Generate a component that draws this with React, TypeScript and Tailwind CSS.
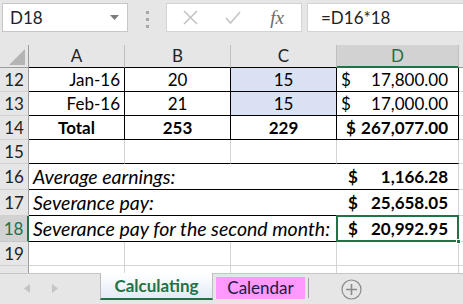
import React from 'react';

type RowProps = {
  label: string;
  h: string;
  active?: boolean;
  children: React.ReactNode;
};

// row header + cells
const Row: React.FC<RowProps> = ({ label, h, active, children }) => (
  <>
    <div
      className={`${h} flex items-center justify-center text-[17px] border-b ${
        active
          ? 'bg-[#d2d2d2] text-[#217346] border-b-[#c6c6c6] border-r-2 border-r-[#217346]'
          : 'bg-[#e6e6e6] text-[#222] border-b-[#d0d0d0] border-r border-r-[#9b9b9b]'
      }`}
    >
      {label}
    </div>
    {children}
  </>
);

const Money: React.FC<{ value: string; bold?: boolean; inset?: string }> = ({ value, bold, inset }) => (
  <div className={`flex items-center justify-between h-full pr-[10px] ${inset ?? 'pl-[4px]'} ${bold ? 'font-bold' : ''}`}>
    <span>$</span>
    <span>{value}</span>
  </div>
);

export default function App() {
  return (
    <div className="w-[463px] h-[304px] overflow-hidden bg-[#e6e6e6] font-['Lato',sans-serif] text-black leading-[20px]">
      {/* Formula bar */}
      <div className="flex h-[45px] pt-[3px]">
        <div className="ml-[2px] w-[126px] h-[29px] bg-white border border-[#c6c6c6] flex items-center justify-between pl-[7px] pr-[8px]">
          <span className="text-[17px] text-[#222]">D18</span>
          <svg width="9" height="5" viewBox="0 0 9 5">
            <path d="M0 0 L9 0 L4.5 5 Z" fill="#7a7a7a" />
          </svg>
        </div>
        <div className="w-[38px] flex flex-col items-center gap-[4px] pt-[8px]">
          <span className="w-[3px] h-[3px] bg-[#a8a8a8]" />
          <span className="w-[3px] h-[3px] bg-[#a8a8a8]" />
          <span className="w-[3px] h-[3px] bg-[#a8a8a8]" />
        </div>
        <div className="w-[136px] h-[29px] bg-white border border-[#d4d4d4] flex items-center">
          <div className="w-[46px] flex justify-center">
            <svg width="15" height="15" viewBox="0 0 15 15">
              <path d="M1 1 L14 14 M14 1 L1 14" stroke="#c3c3c3" strokeWidth="1.6" />
            </svg>
          </div>
          <div className="w-[40px] flex justify-center">
            <svg width="16" height="13" viewBox="0 0 16 13">
              <path d="M1 7 L5.5 12 L15 1" stroke="#c3c3c3" strokeWidth="1.6" fill="none" />
            </svg>
          </div>
          <div className="flex-1 flex justify-center">
            <span className="font-['Liberation_Serif',serif] italic text-[19px] text-[#6a6a6a] leading-none">
              fx
            </span>
          </div>
        </div>
        <div className="ml-[5px] flex-1 h-[29px] bg-white border-l border-y border-[#d4d4d4] flex items-center pl-[13px] text-[17px] text-[#222]">
          =D16*18
        </div>
      </div>

      {/* Sheet grid */}
      <div className="grid grid-cols-[29px_96px_106px_106px_122px_1fr] bg-white text-[17px]">
        {/* column headers */}
        <div className="h-[23px] bg-[#e6e6e6] border-r border-b border-[#9b9b9b] relative">
          <svg className="absolute right-[3px] bottom-[2px]" width="16" height="16" viewBox="0 0 16 16">
            <path d="M16 0 L16 16 L0 16 Z" fill="#b4b4b4" />
          </svg>
        </div>
        <div className="h-[23px] bg-[#e6e6e6] border-r border-r-[#c0c0c0] border-b border-b-black flex items-center justify-center text-[#222]">A</div>
        <div className="h-[23px] bg-[#e6e6e6] border-r border-r-[#c0c0c0] border-b border-b-black flex items-center justify-center text-[#222]">B</div>
        <div className="h-[23px] bg-[#e6e6e6] border-r border-r-[#c0c0c0] border-b border-b-black flex items-center justify-center text-[#222]">C</div>
        <div className="h-[23px] bg-[#d2d2d2] border-r border-r-[#c0c0c0] border-b-2 border-b-[#217346] flex items-center justify-center text-[#217346]">D</div>
        <div className="h-[23px] bg-[#e6e6e6] border-b border-[#9b9b9b]" />

        <Row label="12" h="h-[24px]">
          <div className="border-r border-b border-black flex items-center justify-end pr-[4px]">Jan-16</div>
          <div className="border-r border-b border-black flex items-center justify-center">20</div>
          <div className="border-r border-b border-black bg-[#d9e1f2] flex items-center justify-center">15</div>
          <div className="border-r border-b border-black"><Money value="17,800.00" /></div>
          <div className="border-b border-[#d4d4d4]" />
        </Row>
        <Row label="13" h="h-[24px]">
          <div className="border-r border-b border-black flex items-center justify-end pr-[4px]">Feb-16</div>
          <div className="border-r border-b border-black flex items-center justify-center">21</div>
          <div className="border-r border-b border-black bg-[#d9e1f2] flex items-center justify-center">15</div>
          <div className="border-r border-b border-black"><Money value="17,000.00" /></div>
          <div className="border-b border-[#d4d4d4]" />
        </Row>
        <Row label="14" h="h-[24px]">
          <div className="border-r border-b border-black flex items-center justify-center font-bold">Total</div>
          <div className="border-r border-b border-black flex items-center justify-center font-bold">253</div>
          <div className="border-r border-b border-black flex items-center justify-center font-bold">229</div>
          <div className="border-r border-b border-black"><Money value="267,077.00" bold inset="pl-[9px]" /></div>
          <div className="border-b border-[#d4d4d4]" />
        </Row>
        <Row label="15" h="h-[24px]">
          <div className="border-r border-r-[#d4d4d4] border-b border-b-black" />
          <div className="border-r border-r-[#d4d4d4] border-b border-b-black" />
          <div className="border-r border-r-[#d4d4d4] border-b border-b-black" />
          <div className="border-r border-r-[#d4d4d4] border-b border-b-black" />
          <div className="border-b border-[#d4d4d4]" />
        </Row>
        <Row label="16" h="h-[26px]">
          <div className="col-span-3 border-b border-black flex items-center pl-[4px] italic text-[19.5px] whitespace-nowrap">Average earnings:</div>
          <div className="border-r border-r-[#d4d4d4] border-b border-b-black"><Money value="1,166.28" bold inset="pl-[11px]" /></div>
          <div className="border-b border-[#d4d4d4]" />
        </Row>
        <Row label="17" h="h-[26px]">
          <div className="col-span-3 border-b border-black flex items-center pl-[4px] italic text-[19.5px] whitespace-nowrap">Severance pay:</div>
          <div className="border-r border-r-[#d4d4d4] border-b border-b-black"><Money value="25,658.05" bold inset="pl-[11px]" /></div>
          <div className="border-b border-[#d4d4d4]" />
        </Row>
        <Row label="18" h="h-[26px]" active>
          <div className="col-span-3 border-b border-black flex items-center pl-[4px] italic text-[19.5px] whitespace-nowrap">
            Severance pay for the second month:
          </div>
          <div className="relative border-r border-r-[#d4d4d4] border-b border-b-black">
            <Money value="20,992.95" bold inset="pl-[11px]" />
            <div className="absolute -top-px -left-px -right-px -bottom-px border-2 border-[#217346]" />
            <div className="absolute -right-[3px] -bottom-[3px] w-[5px] h-[5px] bg-[#217346] border border-white" />
          </div>
          <div className="border-b border-[#d4d4d4]" />
        </Row>
        <Row label="19" h="h-[24px]">
          <div className="border-r border-b border-[#d4d4d4]" />
          <div className="border-r border-b border-[#d4d4d4]" />
          <div className="border-r border-b border-[#d4d4d4]" />
          <div className="border-r border-b border-[#d4d4d4]" />
          <div className="border-b border-[#d4d4d4]" />
        </Row>
        <div className="h-[7px] bg-[#e6e6e6] border-r border-[#9b9b9b]" />
        <div className="border-r border-[#d4d4d4]" />
        <div className="border-r border-[#d4d4d4]" />
        <div className="border-r border-[#d4d4d4]" />
        <div className="border-r border-[#d4d4d4]" />
        <div />
      </div>

      {/* Sheet tabs */}
      <div className="h-[31px] border-t border-[#c6c6c6] flex items-start">
        <div className="w-[100px] h-[28px] flex items-center pl-[24px] gap-[22px]">
          <svg width="6" height="9" viewBox="0 0 6 9"><path d="M6 0 L6 9 L0 4.5 Z" fill="#c4c4c4" /></svg>
          <svg width="6" height="9" viewBox="0 0 6 9"><path d="M0 0 L0 9 L6 4.5 Z" fill="#c4c4c4" /></svg>
        </div>
        <div className="w-[113px] h-[27px] -mt-px bg-gradient-to-b from-white to-[#e3ebf6] border-l border-r border-[#bdbdbd] border-b-2 border-b-[#217346] flex items-center justify-center font-bold text-[17px] text-[#217346]">
          Calculating
        </div>
        <div className="ml-[3px] mt-[3px] w-[89px] h-[22px] bg-[#ff99ff] flex items-center justify-center text-[17px] text-[#1a1a40]">
          Calendar
        </div>
        <div className="ml-[3px] mt-[4px] w-px h-[20px] bg-[#a0a0a0]" />
        <div className="ml-[32px] mt-[5px]">
          <svg width="21" height="21" viewBox="0 0 21 21">
            <circle cx="10.5" cy="10.5" r="9.5" fill="none" stroke="#8c8c8c" strokeWidth="1.2" />
            <path d="M10.5 5 V16 M5 10.5 H16" stroke="#8c8c8c" strokeWidth="1.6" />
          </svg>
        </div>
      </div>
    </div>
  );
}
